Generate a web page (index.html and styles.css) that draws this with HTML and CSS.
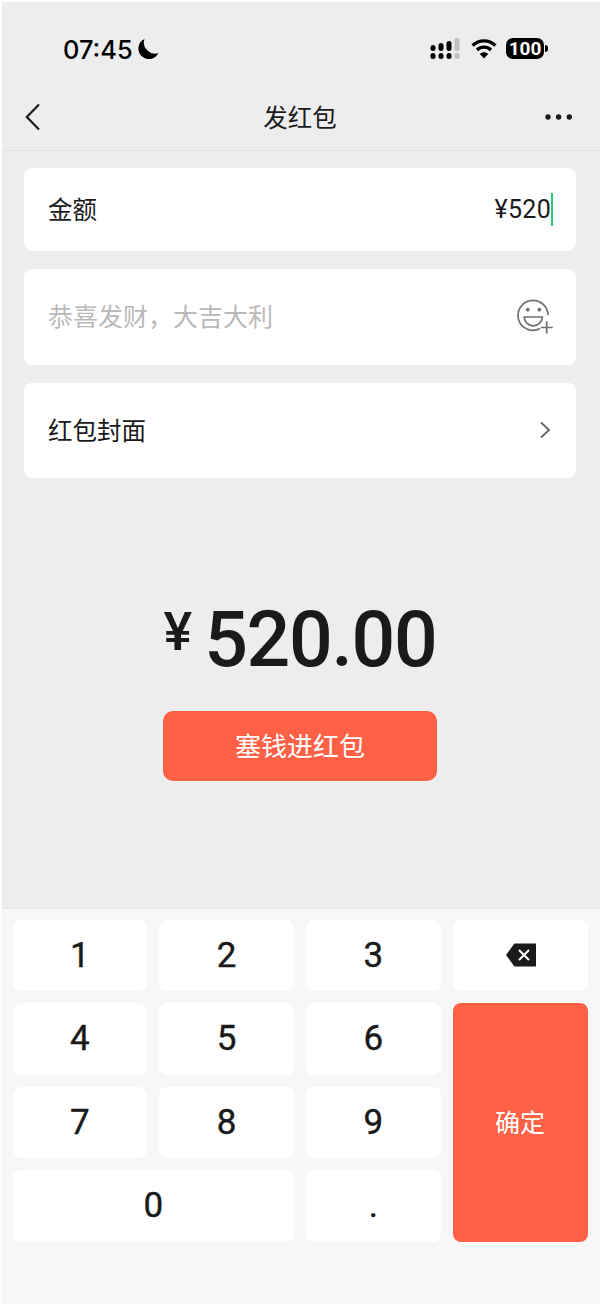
FILE: index.html
```html
<!DOCTYPE html>
<html lang="zh-CN">
<head>
    <meta charset="UTF-8">
    <meta name="viewport" content="width=device-width, initial-scale=1.0">
    <title>发红包</title>
    <link rel="stylesheet" href="styles.css">
</head>
<body>

<div class="page">
    <div class="status-bar">
        <div class="status-left">
            <span class="time">07:45</span>
            <svg class="moon" width="22" height="22" viewBox="0 0 22 22"><path d="M7.5 1 A10.5 10.5 0 1 0 21.4 15 A11 11 0 0 1 7.5 1 Z" fill="#000"/></svg>
        </div>
        <div class="status-right">
            <svg width="30" height="22" viewBox="0 0 30 22">
                <rect x="0.5" y="7" width="5" height="6" rx="2.5"/>
                <rect x="8.5" y="5" width="5" height="8" rx="2.5"/>
                <rect x="16.5" y="3" width="5" height="10" rx="2.5"/>
                <rect x="24.5" y="0" width="5" height="13" rx="1.5" fill="#c0c0c0"/>
                <rect x="0.5" y="15" width="5" height="6" rx="2.5"/>
                <rect x="8.5" y="15" width="5" height="6" rx="2.5"/>
                <rect x="16.5" y="15" width="5" height="6" rx="2.5"/>
                <rect x="24.5" y="15" width="5" height="6" rx="1.5" fill="#c0c0c0"/>
            </svg>
            <svg class="wifi" width="26" height="21" viewBox="0 0 26 21" fill="none" stroke="#000" stroke-width="3.2">
                <path d="M1.5 7.5 C8 1.2 18 1.2 24.5 7.5"/>
                <path d="M6 12 C10 8.2 16 8.2 20 12"/>
                <path d="M13 20.5 L8.8 16 C11 13.6 15 13.6 17.2 16 Z" fill="#000" stroke="none"/>
            </svg>
            <div class="battery"><span class="battery-level">100</span><i class="battery-tip"></i></div>
        </div>
    </div>

    <div class="nav">
        <svg class="back" width="16" height="28" viewBox="0 0 16 28" fill="none" stroke="#1a1a1a" stroke-width="2.2"><path d="M14 1.5 L1.8 14 L14 26.5"/></svg>
        <span class="nav-title">发红包</span>
        <svg class="more" width="28" height="6" viewBox="0 0 28 6" fill="#1a1a1a"><circle cx="3" cy="3" r="2.7"/><circle cx="13.6" cy="3" r="2.7"/><circle cx="24.3" cy="3" r="2.7"/></svg>
    </div>

    <div class="content">
        <div class="form">
            <div class="card card-amount">
                <span>金额</span>
                <span class="amount-input">¥520<i class="caret"></i></span>
            </div>
            <div class="card">
                <span class="placeholder">恭喜发财，大吉大利</span>
                <svg class="emoji" width="38" height="38" viewBox="0 0 38 38" fill="none" stroke="#707070" stroke-width="1.7">
                    <path d="M23 30.6 A15 15 0 1 1 31 17"/>
                    <circle cx="10.7" cy="11.7" r="1.9" fill="#707070" stroke="none"/>
                    <circle cx="22.3" cy="11.7" r="1.9" fill="#707070" stroke="none"/>
                    <path d="M7.2 19 H25.3 C25 24.5 21 27.8 16.2 27.8 C11.5 27.8 7.5 24.5 7.2 19 Z"/>
                    <path d="M29.7 23.5 V35.5 M23.7 29.5 H35.7"/>
                </svg>
            </div>
            <div class="card card-cover">
                <span>红包封面</span>
                <svg class="chevron" width="12" height="18" viewBox="0 0 12 18" fill="none" stroke="#666" stroke-width="1.8"><path d="M2 1.5 L10 9 L2 16.5"/></svg>
            </div>
        </div>

        <div class="total">
            <span class="total-yen">¥</span>
            <span class="total-value">520.00</span>
        </div>
        <button class="submit">塞钱进红包</button>
    </div>

    <div class="keyboard">
        <div class="key">1</div>
        <div class="key">2</div>
        <div class="key">3</div>
        <div class="key">
            <svg class="key-back" width="30" height="24" viewBox="0 0 30 24"><path d="M0 12 L8.5 0.5 H30 V23.5 H8.5 Z" fill="#1a1a1a"/><path d="M13 7 L23 17 M23 7 L13 17" stroke="#fff" stroke-width="2" fill="none"/></svg>
        </div>
        <div class="key">4</div>
        <div class="key">5</div>
        <div class="key">6</div>
        <div class="key key-confirm">确定</div>
        <div class="key">7</div>
        <div class="key">8</div>
        <div class="key">9</div>
        <div class="key key-zero">0</div>
        <div class="key">.</div>
    </div>
</div>

</body>
</html>
```

FILE: styles.css
```css
* {
    box-sizing: border-box;
}
body {
    margin: 0;
    background-color: #fff;
    font-family: "Noto Sans CJK SC", "Noto Sans", sans-serif;
    color: #1a1a1a;
}
.page {
    display: flex;
    flex-direction: column;
    height: 1302px;
    margin: 2px 0 0 2px;
    background-color: #ededed;
    overflow: hidden;
}

/* status bar */
.status-bar {
    display: flex;
    justify-content: space-between;
    height: 78px;
    padding: 36px 52px 0 61px;
}
.status-left {
    display: flex;
    align-items: center;
    gap: 4px;
    height: 22px;
}
.time {
    font-family: Inter, sans-serif;
    font-size: 25.4px;
    font-weight: 500;
    color: #000;
}
.status-right {
    display: flex;
    align-items: flex-start;
}
.wifi {
    margin-left: 11px;
}
.battery {
    display: flex;
    align-items: center;
    margin-left: 9px;
    height: 21px;
}
.battery-level {
    width: 38px;
    height: 21px;
    border-radius: 7px;
    background-color: #000;
    color: #fff;
    font-family: Roboto, sans-serif;
    font-size: 19px;
    font-weight: 700;
    line-height: 21px;
    text-align: center;
}
.battery-tip {
    width: 3px;
    height: 7px;
    margin-left: 1px;
    border-radius: 0 3px 3px 0;
    background-color: #000;
}

/* title row */
.nav {
    display: flex;
    align-items: center;
    justify-content: space-between;
    height: 71px;
    padding: 3px 27px 0 23px;
    border-bottom: 1px solid #e2e2e2;
    position: relative;
}
.nav-title {
    position: absolute;
    left: 0;
    right: 2px;
    text-align: center;
    font-size: 24.5px;
}

/* form cards */
.content {
    padding-right: 2px;
}
.form {
    display: flex;
    flex-direction: column;
    gap: 18px;
    margin: 17px 22px 0;
}
.card {
    display: flex;
    align-items: center;
    justify-content: space-between;
    height: 95.5px;
    padding: 0 23px 3px 24px;
    background-color: #fff;
    border-radius: 8px;
    font-size: 24.5px;
}
.card-amount {
    height: 83px;
}
.card-cover {
    padding-bottom: 1px;
}
.amount-input {
    display: flex;
    align-items: center;
    margin-top: 3px;
    font-family: Roboto, sans-serif;
    font-size: 25px;
    letter-spacing: 0.3px;
}
.caret {
    width: 2px;
    height: 33px;
    background-color: #2ccb78;
}
.placeholder {
    color: #b9b9b9;
    font-size: 25px;
}
.emoji {
    margin: 3px -2px 0 0;
}
.chevron {
    margin: 1px 2px 0 0;
}

/* amount and button */
.total {
    display: flex;
    justify-content: center;
    align-items: flex-start;
    gap: 12px;
    margin-top: 117px;
    font-family: Roboto, sans-serif;
    font-weight: 500;
    line-height: 90px;
}
.total-yen {
    padding-top: 5px;
    font-size: 54px;
    line-height: 64px;
}
.total-value {
    font-size: 77px;
    letter-spacing: -1.3px;
}
.submit {
    display: block;
    width: 274px;
    height: 70px;
    margin: 26px auto 0;
    padding: 0 0 3px;
    border: none;
    border-radius: 10px;
    background-color: #ff6146;
    color: #fff;
    font-family: inherit;
    font-size: 26px;
}

/* number pad */
.keyboard {
    display: grid;
    grid-template-columns: repeat(4, 134.75px);
    grid-auto-rows: 71.5px;
    gap: 12px;
    height: 396px;
    margin-top: auto;
    padding: 10.5px 0 0 10.5px;
    background-color: #f7f7f7;
    border-top: 1px solid #e4e4e4;
}
.key {
    display: flex;
    align-items: center;
    justify-content: center;
    background-color: #fff;
    border-radius: 8px;
    font-family: Roboto, sans-serif;
    font-size: 35px;
    font-weight: 400;
    -webkit-text-stroke: 0.4px #1a1a1a;
}
.key-back {
    margin-left: 2px;
}
.key-zero {
    grid-column: span 2;
}
.key-confirm {
    grid-column: 4;
    grid-row: 2 / span 3;
    padding-bottom: 3px;
    background-color: #ff6146;
    color: #fff;
    font-family: "Noto Sans CJK SC", sans-serif;
    font-size: 25px;
    -webkit-text-stroke: 0;
}
```
